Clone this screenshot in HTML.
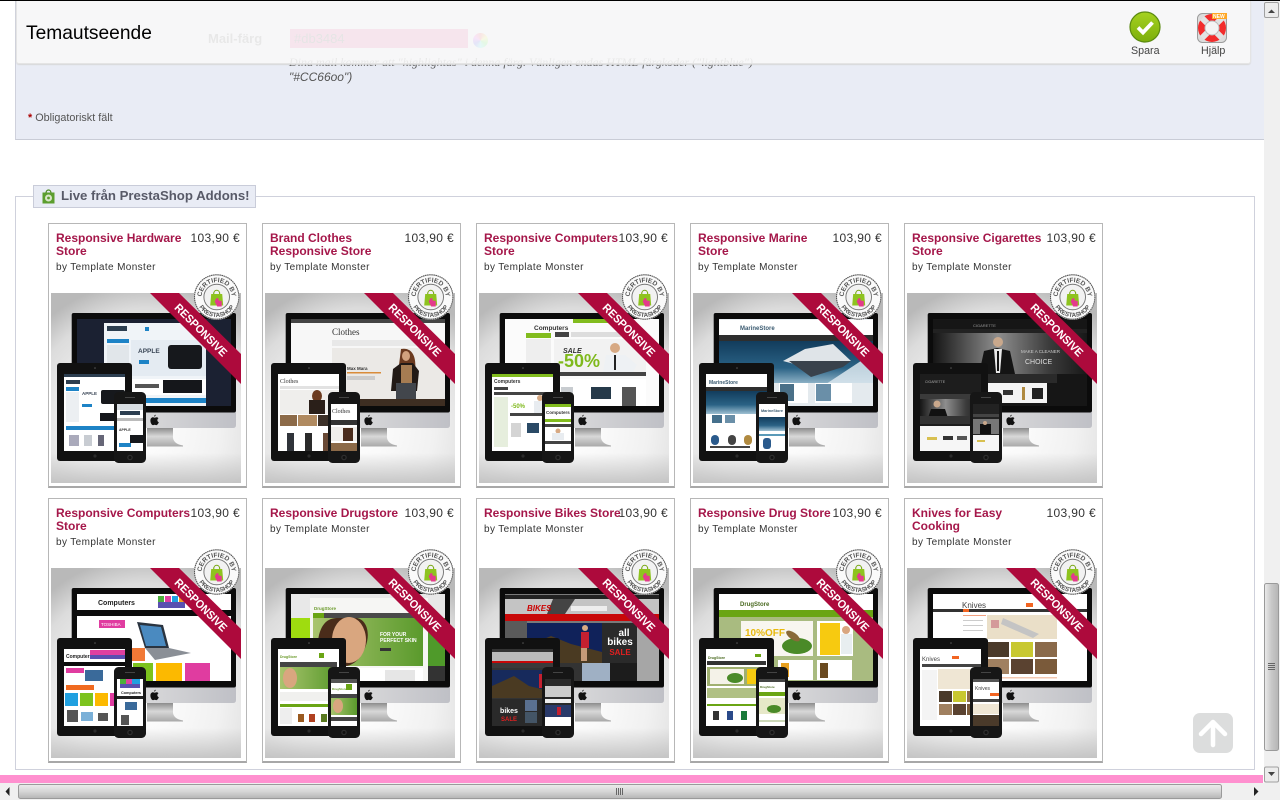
<!DOCTYPE html>
<html><head><meta charset="utf-8"><title>Temautseende</title>
<style>
html,body{margin:0;padding:0;width:1280px;height:800px;overflow:hidden;background:#fff;font-family:"Liberation Sans",Arial,sans-serif}
.a{position:absolute}
.card{position:absolute;width:197px;height:262px;border:1px solid #b7b7b7;border-bottom:2px solid #a8a8a8;background:#fff}
.t{position:absolute;left:7px;top:8px;font-size:12px;line-height:13px;font-weight:bold;color:#a5174a;white-space:nowrap}
.p{position:absolute;right:6px;top:7px;font-size:12px;line-height:14px;color:#333;white-space:nowrap;letter-spacing:.35px}
.b{position:absolute;left:7px;font-size:10px;line-height:12px;color:#333;white-space:nowrap;letter-spacing:.38px}
.card svg.i{position:absolute;left:2px;top:69px;overflow:visible;filter:blur(.3px)}
svg text{font-family:"Liberation Sans",Arial,sans-serif}
</style></head><body>
<svg width="0" height="0" style="position:absolute"><defs>
<radialGradient id="bgr" cx=".5" cy=".72" r=".78"><stop offset="0" stop-color="#fff"/><stop offset=".5" stop-color="#f1f1f1"/><stop offset=".82" stop-color="#dcdcdc"/><stop offset="1" stop-color="#b9b9b9"/></radialGradient>
<linearGradient id="btm" x1="0" x2="0" y1="0" y2="1"><stop offset="0" stop-color="#c0c0c0" stop-opacity="0"/><stop offset="1" stop-color="#bfbfbf" stop-opacity=".85"/></linearGradient>
<linearGradient id="chin" x1="0" x2="1" y1="0" y2="0"><stop offset="0" stop-color="#e6e6e6"/><stop offset=".5" stop-color="#d6d6d8"/><stop offset="1" stop-color="#bfc0c6"/></linearGradient>
<linearGradient id="st" x1="0" x2="0" y1="0" y2="1"><stop offset="0" stop-color="#8c8c8c"/><stop offset=".45" stop-color="#d8d8d8"/><stop offset="1" stop-color="#a8a8a8"/></linearGradient>
<linearGradient id="sea" x1="0" x2="0" y1="0" y2="1"><stop offset="0" stop-color="#123c5c"/><stop offset=".6" stop-color="#2a6285"/><stop offset="1" stop-color="#9fc0d2"/></linearGradient>
<linearGradient id="gy" x1="0" x2="1" y1="0" y2="0"><stop offset="0" stop-color="#151515"/><stop offset=".42" stop-color="#8e8e8e"/><stop offset=".75" stop-color="#3c3c3c"/><stop offset="1" stop-color="#181818"/></linearGradient>
<linearGradient id="grn" x1="0" x2="1" y1="0" y2="0"><stop offset="0" stop-color="#a9c46e"/><stop offset="1" stop-color="#5a9a2c"/></linearGradient>
<linearGradient id="thumbv" x1="0" x2="1" y1="0" y2="0"><stop offset="0" stop-color="#ececec"/><stop offset=".5" stop-color="#c8c8c8"/><stop offset="1" stop-color="#b5b5b5"/></linearGradient>
<linearGradient id="thumbh" x1="0" x2="0" y1="0" y2="1"><stop offset="0" stop-color="#ececec"/><stop offset=".5" stop-color="#d6d6d6"/><stop offset="1" stop-color="#b5b5b5"/></linearGradient>
<linearGradient id="gbtn" x1="0" x2="0" y1="0" y2="1"><stop offset="0" stop-color="#a5d21f"/><stop offset="1" stop-color="#7cae0c"/></linearGradient>
<path id="arcT" d="M-14.5 4A15 15 0 1 1 14.5 4"/>
<path id="arcB" d="M-19.5 4.500A20 20 0 0 0 19.500 4.500"/>
<g id="mon">
<rect width="190" height="190" fill="url(#bgr)"/>
<rect y="160" width="190" height="30" fill="url(#btm)"/>
<path d="M96 135H122V145Q123 151 132 152.500V153.500H96Z" fill="url(#st)"/>
<path d="M20.700 119H185V132Q185 135 182 135H24Q20.700 135 20.700 132Z" fill="url(#chin)"/>
<rect x="20.700" y="20" width="164.300" height="99.500" rx="2" fill="#0b0b0b"/>
<path d="M103 123.500c.3-1 1-1.600 1.700-1.700 0 1-.7 1.800-1.700 1.700zm-3.600 4c0-2 1.300-3.200 2.600-3.200.7 0 1.100.4 1.700.4s1-.4 1.900-.4c.8 0 1.500.4 1.900 1-1.700 1-1.400 3.300.3 4-.5 1.300-1.400 2.800-2.300 2.800-.7 0-1-.4-1.800-.4s-1.100.4-1.800.4c-1.200 0-2.500-2.300-2.500-4.600z" fill="#111"/>
</g>
<g id="tab"><rect x="6" y="70" width="75" height="98" rx="3" fill="#111"/><circle cx="44" cy="75" r=".8" fill="#555"/><circle cx="44" cy="163" r="1.600" fill="#2a2a2a"/></g>
<g id="ph"><rect x="63" y="99" width="32" height="71" rx="4.500" fill="#161616"/><rect x="74" y="104" width="10" height="1" fill="#444"/><circle cx="79" cy="164.500" r="2.800" fill="#2e2e2e"/><circle cx="79" cy="164.500" r="1.500" fill="#111"/></g>
<g id="rib"><polygon points="99,0 128,0 190,61 190,91" fill="#ad0a3c"/></g>
<g id="seal">
<circle r="22.800" fill="#fafafa"/><circle r="22.200" fill="none" stroke="#555" stroke-width="1.100" stroke-dasharray="1.600 .5"/>
<circle r="12.800" fill="none" stroke="#777" stroke-width="1"/>
<circle r="12" fill="#f2f2f2"/>
<path d="M-5.500-3H5.500L6.500 8.500H-6.500Z" fill="#8ec31f"/><path d="M-3-3C-3-8 3-8 3-3" fill="none" stroke="#7aa818" stroke-width="1.100"/>
<path d="M-.5 1.500L1.500 1 2 3.500 5 4V9.500H.5L-2 4.500Z" fill="#e43a8c"/>
</g>
</defs></svg>

<!-- page content behind header -->
<div class="a" style="left:15px;top:0;width:1248px;height:139px;background:#e9ecf5;border-left:1px solid #cfd1dc;border-bottom:1px solid #c9ccd6;box-sizing:content-box"></div>
<div class="a" style="left:208px;top:31px;font-size:13px;font-weight:bold;color:#555">Mail-färg</div>
<div class="a" style="left:290px;top:29px;width:178px;height:19px;background:#db3484;color:#333;font-size:13px;line-height:19px;text-indent:4px">#db3484</div>
<div class="a" style="left:473px;top:33px;width:15px;height:15px;border-radius:50%;background:conic-gradient(#e33,#ee3,#3e3,#3ee,#33e,#e3e,#e33)"></div>
<div class="a" style="left:289px;top:55px;font-family:'Liberation Serif',serif;font-style:italic;font-size:12px;line-height:15px;color:#555;white-space:nowrap">Dina mail kommer att "highlightas" i denna färg. Vänligen endas HTML-färgkoder ("lightblue")<br><span style="font-family:'Liberation Sans',sans-serif">"#CC66oo")</span></div>
<div class="a" style="left:28px;top:112px;font-size:10.800px;line-height:12px;color:#555;white-space:nowrap"><span style="color:#a00;font-weight:bold">*</span> Obligatoriskt fält</div>

<!-- header -->
<div class="a" style="left:0;top:0;width:1280px;height:1px;background:#000"></div>
<div class="a" style="left:16px;top:1px;width:1233px;height:62px;background:rgba(248,248,248,.9);border:1px solid #e4e4e4;border-top:0;border-radius:0 0 3px 3px;box-shadow:0 1px 1px #d8d8d8"></div>
<div class="a" style="left:26px;top:23px;font-size:19.200px;line-height:22px;color:#000;white-space:nowrap">Temautseende</div>
<svg class="a" style="left:1129px;top:11px" width="32" height="32" viewBox="0 0 32 32"><circle cx="16" cy="16" r="15" fill="url(#gbtn)" stroke="#5b8a10" stroke-width="1.200"/><path d="M9 16.500L14 21.500 23.500 11.500" fill="none" stroke="#fff" stroke-width="3.800"/></svg>
<div class="a" style="left:1131px;top:45px;font-size:10.700px;line-height:13px;color:#444">Spara</div>
<svg class="a" style="left:1197px;top:13px" width="30" height="30" viewBox="0 0 30 30"><rect x=".5" y=".5" width="29" height="29" rx="5" fill="#dcdcdc" stroke="#9c9c9c"/><circle cx="15" cy="15" r="14" fill="#f22c2c"/><path d="M5 5L25 25M25 5L5 25" stroke="#e2e2e2" stroke-width="6"/><circle cx="15" cy="15" r="7" fill="#f4f4f4" stroke="#bbb"/><rect x="15" y="0" width="15" height="6" fill="#ffa726"/><text x="16" y="5.200" font-size="5" font-weight="bold" fill="#fff">NEW</text></svg>
<div class="a" style="left:1201px;top:45px;font-size:10.700px;line-height:13px;color:#444">Hjälp</div>

<!-- fieldset -->
<div class="a" style="left:15px;top:196px;width:1238px;height:572px;border:1px solid #cfd1dc"></div>
<div class="a" style="left:33px;top:185px;width:221px;height:21px;background:#e9ecf5;border:1px solid #c9ccd9"></div>
<svg class="a" style="left:41px;top:189px" width="15" height="15" viewBox="0 0 15 15"><rect x="1.500" y="3.500" width="12" height="11" fill="#5c9e2e"/><path d="M5 4C5 0 10 0 10 4" fill="none" stroke="#4e8a24" stroke-width="1.200"/><circle cx="7.500" cy="9" r="3.500" fill="#d9e6c8"/><circle cx="7.500" cy="9" r="1.400" fill="#5c9e2e"/></svg>
<div class="a" style="left:61px;top:188px;font-size:13.200px;line-height:16px;font-weight:bold;color:#585a68;white-space:nowrap">Live från PrestaShop Addons!</div>

<!-- CARD 1 -->
<div class="card" style="left:48px;top:223px"><div class="t">Responsive Hardware<br>Store</div><div class="p">103,90 €</div><div class="b" style="top:38px">by Template Monster</div>
<svg class="i" width="190" height="190" viewBox="0 0 190 190"><use href="#mon"/>
<rect x="26" y="26" width="154" height="87" fill="#1b2132"/><rect x="53" y="30" width="102" height="83" fill="#f0f4f8"/><rect x="56" y="33" width="20" height="5" fill="#2c3e50"/><rect x="94" y="34" width="4" height="4" fill="#1d83c6"/><rect x="56" y="46" width="22" height="4" fill="#1d83c6"/><rect x="56" y="52" width="22" height="32" fill="#e1e6ea"/><rect x="80" y="47" width="75" height="36" fill="#e4ebf2"/><text x="87" y="60" font-size="6.500" font-weight="bold" fill="#3a4656">APPLE</text><rect x="88" y="67" width="10" height="4" fill="#1d83c6"/><rect x="117" y="52" width="34" height="24" rx="3" fill="#16181c"/><rect x="80" y="86" width="75" height="16" fill="#fff"/><rect x="112" y="87" width="39" height="13" fill="#15171b"/><rect x="84" y="91" width="24" height="4" fill="#555"/><rect x="56" y="105" width="99" height="5" fill="#1d83c6"/>
<use href="#tab"/><rect x="13" y="81" width="61" height="77" fill="#fff"/><rect x="13" y="81" width="61" height="3" fill="#2c3e50"/><rect x="15" y="87" width="14" height="4" fill="#2c3e50"/><rect x="15" y="94" width="13" height="4" fill="#1d83c6"/><rect x="15" y="99" width="13" height="30" fill="#eceff2"/><text x="31" y="102" font-size="4.500" font-weight="bold" fill="#3a4656">APPLE</text><rect x="31" y="111" width="10" height="3" fill="#1d83c6"/><rect x="50" y="97" width="24" height="14" rx="2" fill="#16181c"/><rect x="49" y="120" width="25" height="8" fill="#15171b"/><rect x="15" y="133" width="59" height="4" fill="#1d83c6"/><rect x="18" y="142" width="10" height="11" fill="#aab"/><rect x="33" y="142" width="8" height="11" fill="#c8ccd2"/><rect x="47" y="142" width="6" height="11" fill="#667"/>
<use href="#ph"/><rect x="66" y="111" width="26" height="47" fill="#fff"/><rect x="66" y="111" width="26" height="6" fill="#d8dde2"/><rect x="69" y="118" width="20" height="4" fill="#2c3e50"/><rect x="66" y="125" width="26" height="3" fill="#bbb"/><text x="68" y="138" font-size="3.500" font-weight="bold" fill="#333">APPLE</text><rect x="79" y="142" width="13" height="8" fill="#16181c"/><rect x="68" y="150" width="12" height="4" fill="#1d83c6"/>
<use href="#rib"/><text transform="translate(150 37) rotate(45)" x="-34.500" y="4" font-size="11.500" font-weight="bold" fill="#fff" textLength="69" lengthAdjust="spacingAndGlyphs">RESPONSIVE</text>
<g transform="translate(165.700 4)"><use href="#seal"/><text font-size="6.600" font-weight="bold" fill="#555"><textPath href="#arcT" startOffset="50%" text-anchor="middle">CERTIFIED BY</textPath></text><text font-size="6.200" font-weight="bold" fill="#555"><textPath href="#arcB" startOffset="50%" text-anchor="middle">PRESTASHOP</textPath></text></g></svg></div>

<!-- CARD 2 -->
<div class="card" style="left:262px;top:223px"><div class="t">Brand Clothes<br>Responsive Store</div><div class="p">103,90 €</div><div class="b" style="top:38px">by Template Monster</div>
<svg class="i" width="190" height="190" viewBox="0 0 190 190"><use href="#mon"/>
<rect x="26" y="26" width="154" height="87" fill="#f7f7f7"/><rect x="26" y="26" width="154" height="4" fill="#444"/><text x="67" y="42" font-size="9" fill="#333" style="font-family:'Liberation Serif',serif">Clothes</text><rect x="67" y="47" width="105" height="6" fill="#e8e8e8"/><rect x="67" y="55" width="113" height="51" fill="#ebe9e6"/><text x="82" y="77" font-size="4.500" font-weight="bold" fill="#333">Max Mara</text><rect x="82" y="79" width="34" height="1.500" fill="#d98c3a"/><rect x="82" y="83" width="28" height="4" fill="#ccc"/><path d="M136 56C146 54 152 62 150 78L152 92H144V72H134Z" fill="#6b3a1f"/><ellipse cx="141" cy="63" rx="4" ry="5" fill="#d2a27e"/><path d="M126 98L128 76 136 70H148L154 78 152 98Z" fill="#221a16"/><rect x="136" y="72" width="11" height="18" fill="#a67c52"/><rect x="131" y="90" width="20" height="16" fill="#42464c"/><rect x="67" y="106" width="113" height="7" fill="#3e2e22"/>
<use href="#tab"/><rect x="13" y="81" width="61" height="77" fill="#fff"/><text x="15" y="90" font-size="6" fill="#333" style="font-family:'Liberation Serif',serif">Clothes</text><rect x="15" y="93" width="59" height="3" fill="#e2e2e2"/><rect x="15" y="97" width="59" height="24" fill="#efeeec"/><ellipse cx="52" cy="103" rx="5" ry="6" fill="#6b3a1f"/><rect x="44" y="107" width="16" height="14" fill="#2a1f19"/><rect x="15" y="122" width="17" height="11" fill="#8c6a48"/><rect x="33" y="122" width="19" height="11" fill="#b08a60"/><rect x="53" y="122" width="21" height="11" fill="#3c3028"/><rect x="22" y="140" width="7" height="18" fill="#30343a"/><rect x="40" y="140" width="7" height="18" fill="#2a2a2a"/><rect x="58" y="140" width="8" height="18" fill="#6a4a36"/>
<use href="#ph"/><rect x="66" y="111" width="26" height="47" fill="#fff"/><text x="67" y="120" font-size="6" fill="#333" style="font-family:'Liberation Serif',serif">Clothes</text><rect x="66" y="127" width="26" height="5" fill="#333"/><rect x="66" y="134" width="26" height="14" fill="#f0eeeb"/><rect x="78" y="135" width="10" height="13" fill="#4a2c1c"/><rect x="66" y="150" width="26" height="8" fill="#8c6a48"/>
<use href="#rib"/><text transform="translate(150 37) rotate(45)" x="-34.500" y="4" font-size="11.500" font-weight="bold" fill="#fff" textLength="69" lengthAdjust="spacingAndGlyphs">RESPONSIVE</text>
<g transform="translate(165.700 4)"><use href="#seal"/><text font-size="6.600" font-weight="bold" fill="#555"><textPath href="#arcT" startOffset="50%" text-anchor="middle">CERTIFIED BY</textPath></text><text font-size="6.200" font-weight="bold" fill="#555"><textPath href="#arcB" startOffset="50%" text-anchor="middle">PRESTASHOP</textPath></text></g></svg></div>

<!-- CARD 3 -->
<div class="card" style="left:476px;top:223px"><div class="t">Responsive Computers<br>Store</div><div class="p">103,90 €</div><div class="b" style="top:38px">by Template Monster</div>
<svg class="i" width="190" height="190" viewBox="0 0 190 190"><use href="#mon"/>
<rect x="26" y="26" width="154" height="87" fill="#fbfbfb"/><rect x="94" y="26" width="60" height="4" fill="#82bc1e"/><text x="55" y="37" font-size="6.500" font-weight="bold" fill="#333">Computers</text><rect x="47" y="40" width="25" height="5" fill="#82bc1e"/><rect x="47" y="46" width="25" height="30" fill="#eee"/><rect x="76" y="39" width="14" height="5" fill="#444"/><rect x="92" y="39" width="50" height="5" fill="#ddd"/><rect x="75" y="46" width="92" height="33" fill="#f2f2f2"/><text x="84" y="60" font-size="7" font-weight="bold" font-style="italic" fill="#333">SALE</text><text x="79" y="74" font-size="18" font-weight="bold" fill="#7fb91c">-50%</text><circle cx="136" cy="55" r="5" fill="#d7a983"/><path d="M124 79L127 62H146L158 72 154 79Z" fill="#eef1f4"/><rect x="135" y="62" width="2" height="15" fill="#222"/><rect x="75" y="79" width="92" height="4" fill="#444"/><rect x="75" y="86" width="92" height="27" fill="#fff"/><rect x="82" y="94" width="12" height="19" fill="#c8ccd0"/><rect x="112" y="94" width="20" height="12" fill="#263a4a"/><rect x="143" y="94" width="14" height="19" fill="#555"/>
<use href="#tab"/><rect x="13" y="81" width="61" height="77" fill="#fff"/><rect x="13" y="81" width="61" height="3" fill="#82bc1e"/><text x="15" y="90" font-size="5" font-weight="bold" fill="#333">Computers</text><rect x="15" y="94" width="14" height="3" fill="#444"/><rect x="15" y="99" width="59" height="3" fill="#444"/><rect x="15" y="104" width="14" height="50" fill="#e6eedd"/><text x="32" y="115" font-size="6" font-weight="bold" fill="#7fb91c">-50%</text><circle cx="61" cy="105" r="3" fill="#d7a983"/><rect x="55" y="108" width="13" height="12" fill="#e8ecf0"/><rect x="31" y="120" width="43" height="3" fill="#444"/><rect x="32" y="130" width="10" height="14" fill="#d4d4d4"/><rect x="48" y="130" width="12" height="10" fill="#2a4a66"/>
<use href="#ph"/><rect x="66" y="111" width="26" height="47" fill="#fff"/><rect x="66" y="111" width="26" height="3" fill="#82bc1e"/><text x="67" y="121" font-size="4.500" font-weight="bold" fill="#333">Computers</text><rect x="66" y="126" width="26" height="3" fill="#82bc1e"/><rect x="66" y="131" width="26" height="3" fill="#444"/><circle cx="79" cy="138" r="2.500" fill="#d7a983"/><rect x="73" y="140" width="12" height="7" fill="#e8ecf0"/><rect x="66" y="148" width="26" height="3" fill="#444"/>
<use href="#rib"/><text transform="translate(150 37) rotate(45)" x="-34.500" y="4" font-size="11.500" font-weight="bold" fill="#fff" textLength="69" lengthAdjust="spacingAndGlyphs">RESPONSIVE</text>
<g transform="translate(165.700 4)"><use href="#seal"/><text font-size="6.600" font-weight="bold" fill="#555"><textPath href="#arcT" startOffset="50%" text-anchor="middle">CERTIFIED BY</textPath></text><text font-size="6.200" font-weight="bold" fill="#555"><textPath href="#arcB" startOffset="50%" text-anchor="middle">PRESTASHOP</textPath></text></g></svg></div>

<!-- CARD 4 -->
<div class="card" style="left:690px;top:223px"><div class="t">Responsive Marine<br>Store</div><div class="p">103,90 €</div><div class="b" style="top:38px">by Template Monster</div>
<svg class="i" width="190" height="190" viewBox="0 0 190 190"><use href="#mon"/>
<rect x="26" y="26" width="154" height="87" fill="#e9eef2"/><rect x="26" y="27" width="154" height="15" fill="#fff"/><text x="47" y="37" font-size="6" font-weight="bold" fill="#3a5a70">MarineStore</text><rect x="26" y="42" width="154" height="6" fill="#2e2e2e"/><rect x="26" y="48" width="154" height="45" fill="url(#sea)"/><path d="M130 93L180 60V113H110Z" fill="#dce8ee" opacity=".85"/><path d="M90 68L112 56 140 51 158 68 120 76Z" fill="#dfe4e8"/><path d="M96 68L158 68 150 74 118 84Z" fill="#39424c"/><rect x="26" y="90" width="154" height="23" fill="#e4eaee"/><rect x="86" y="90" width="29" height="20" fill="#fff"/><rect x="87" y="91" width="14" height="17" fill="#4a7088"/><rect x="122" y="90" width="37" height="20" fill="#fff"/><rect x="123" y="91" width="15" height="17" fill="#6a8fa8"/>
<use href="#tab"/><rect x="13" y="81" width="61" height="77" fill="#fff"/><text x="16" y="91" font-size="5" font-weight="bold" fill="#3a5a70">MarineStore</text><rect x="13" y="94" width="61" height="4" fill="#2e2e2e"/><rect x="13" y="98" width="61" height="23" fill="url(#sea)"/><rect x="19" y="122" width="10" height="8" fill="#45708c"/><rect x="32" y="122" width="10" height="8" fill="#6a8fa8"/><rect x="18" y="142" width="8" height="10" rx="4" fill="#2a5a8c"/><rect x="35" y="142" width="8" height="10" rx="4" fill="#444"/><rect x="51" y="142" width="8" height="10" rx="4" fill="#b08a40"/><rect x="17" y="153" width="40" height="2" fill="#444"/>
<use href="#ph"/><rect x="66" y="111" width="26" height="47" fill="#fff"/><text x="68" y="119" font-size="3.800" font-weight="bold" fill="#3a5a70">MarineStore</text><rect x="66" y="124" width="26" height="14" fill="url(#sea)"/><rect x="66" y="141" width="26" height="2" fill="#5a9ab8"/><rect x="70" y="145" width="8" height="11" rx="3" fill="#2a5a8c"/>
<use href="#rib"/><text transform="translate(150 37) rotate(45)" x="-34.500" y="4" font-size="11.500" font-weight="bold" fill="#fff" textLength="69" lengthAdjust="spacingAndGlyphs">RESPONSIVE</text>
<g transform="translate(165.700 4)"><use href="#seal"/><text font-size="6.600" font-weight="bold" fill="#555"><textPath href="#arcT" startOffset="50%" text-anchor="middle">CERTIFIED BY</textPath></text><text font-size="6.200" font-weight="bold" fill="#555"><textPath href="#arcB" startOffset="50%" text-anchor="middle">PRESTASHOP</textPath></text></g></svg></div>

<!-- CARD 5 -->
<div class="card" style="left:904px;top:223px"><div class="t">Responsive Cigarettes<br>Store</div><div class="p">103,90 €</div><div class="b" style="top:38px">by Template Monster</div>
<svg class="i" width="190" height="190" viewBox="0 0 190 190"><use href="#mon"/>
<rect x="26" y="26" width="154" height="87" fill="#161616"/><rect x="26" y="36" width="154" height="4" fill="#222"/><text x="66" y="34" font-size="4" fill="#999">CIGARETTE</text><rect x="26" y="40" width="154" height="41" fill="url(#gy)"/><circle cx="91" cy="49" r="5" fill="#c9a88c"/><path d="M72 81L77 58 90 55 103 58 108 81Z" fill="#141414"/><path d="M87 56H95L93 80H89Z" fill="#e8e8e8"/><rect x="90" y="58" width="2" height="20" fill="#111"/><text x="114" y="60" font-size="4.500" fill="#ccc">MAKE A CLEANER</text><text x="118" y="71" font-size="7" fill="#ddd">CHOICE</text><rect x="75" y="81" width="75" height="9" fill="#2a2a2a"/><rect x="80" y="90" width="60" height="20" fill="#f4f4f4"/><rect x="96" y="97" width="10" height="5" fill="#333"/><rect x="115" y="94" width="3" height="13" fill="#b08a40"/><rect x="125" y="95" width="11" height="11" fill="#222"/>
<use href="#tab"/><rect x="13" y="81" width="61" height="77" fill="#1d1d1d"/><text x="18" y="90" font-size="3.500" fill="#aaa">CIGARETTE</text><rect x="13" y="101" width="61" height="5" fill="#3a3a3a"/><rect x="13" y="106" width="61" height="25" fill="url(#gy)"/><circle cx="30" cy="111" r="3.500" fill="#c9a88c"/><path d="M19 131L24 116H38L43 131Z" fill="#111"/><rect x="13" y="123" width="61" height="8" fill="#333"/><rect x="13" y="133" width="61" height="25" fill="#f6f6f6"/><rect x="20" y="144" width="10" height="3" fill="#d8c050"/><rect x="36" y="143" width="10" height="4" fill="#333"/><rect x="50" y="143" width="10" height="4" fill="#555"/>
<use href="#ph"/><rect x="66" y="111" width="26" height="47" fill="#222"/><rect x="66" y="121" width="26" height="3" fill="#444"/><rect x="66" y="126" width="26" height="15" fill="#777"/><rect x="73" y="131" width="11" height="10" fill="#111"/><circle cx="78" cy="130" r="2" fill="#c9a88c"/><rect x="66" y="142" width="26" height="16" fill="#f6f6f6"/><rect x="70" y="147" width="8" height="2" fill="#d8c050"/>
<use href="#rib"/><text transform="translate(150 37) rotate(45)" x="-34.500" y="4" font-size="11.500" font-weight="bold" fill="#fff" textLength="69" lengthAdjust="spacingAndGlyphs">RESPONSIVE</text>
<g transform="translate(165.700 4)"><use href="#seal"/><text font-size="6.600" font-weight="bold" fill="#555"><textPath href="#arcT" startOffset="50%" text-anchor="middle">CERTIFIED BY</textPath></text><text font-size="6.200" font-weight="bold" fill="#555"><textPath href="#arcB" startOffset="50%" text-anchor="middle">PRESTASHOP</textPath></text></g></svg></div>

<!-- CARD 6 -->
<div class="card" style="left:48px;top:498px"><div class="t">Responsive Computers<br>Store</div><div class="p">103,90 €</div><div class="b" style="top:38px">by Template Monster</div>
<svg class="i" width="190" height="190" viewBox="0 0 190 190"><use href="#mon"/>
<rect x="26" y="26" width="154" height="87" fill="#fff"/><text x="47" y="37" font-size="7" font-weight="bold" fill="#222">Computers</text><rect x="107" y="28" width="6" height="6" fill="#4caf3c"/><rect x="114" y="28" width="6" height="6" fill="#e040a0"/><rect x="121" y="28" width="6" height="6" fill="#20a0e0"/><rect x="128" y="28" width="6" height="6" fill="#f0a020"/><rect x="107" y="34" width="27" height="6" fill="#5a50b0"/><rect x="26" y="42" width="154" height="6" fill="#0c0c0c"/><rect x="48" y="52" width="26" height="8" fill="#e03ca0"/><text x="50" y="58" font-size="4.500" fill="#fff">TOSHIBA</text><path d="M86 54L112 57 118 80 94 80Z" fill="#2a3440"/><path d="M89 57L110 59 115 78 95 78Z" fill="#4a8ac0"/><path d="M94 80L118 80 140 85 104 92Z" fill="#8a8f96"/><rect x="48" y="80" width="46" height="13" fill="#f06a20" opacity=".9"/><rect x="82" y="95" width="20" height="18" fill="#7cc31e"/><rect x="105" y="95" width="26" height="18" fill="#fcb900"/><rect x="134" y="95" width="25" height="18" fill="#e03ca0"/><rect x="48" y="95" width="32" height="18" fill="#f7f7f7"/>
<use href="#tab"/><rect x="13" y="81" width="61" height="77" fill="#fff"/><text x="15" y="90" font-size="5" font-weight="bold" fill="#222">Computers</text><rect x="39" y="82" width="35" height="5" fill="#e040a0"/><rect x="39" y="87" width="35" height="4" fill="#5a50b0"/><rect x="13" y="94" width="61" height="4" fill="#0c0c0c"/><rect x="15" y="100" width="18" height="5" fill="#e03ca0"/><rect x="34" y="102" width="18" height="11" fill="#3a6a9a"/><rect x="15" y="117" width="28" height="5" fill="#f06a20"/><rect x="14" y="125" width="13" height="13" fill="#20a0e0"/><rect x="29" y="125" width="13" height="13" fill="#7cc31e"/><rect x="44" y="125" width="13" height="13" fill="#fcb900"/><rect x="59" y="125" width="15" height="13" fill="#e03ca0"/><rect x="16" y="142" width="11" height="12" fill="#555"/><rect x="30" y="144" width="12" height="9" fill="#7ab0d8"/><rect x="47" y="145" width="10" height="8" fill="#555"/>
<use href="#ph"/><rect x="66" y="111" width="26" height="47" fill="#fff"/><rect x="69" y="111" width="6" height="5" fill="#4caf3c"/><rect x="75" y="111" width="6" height="5" fill="#e040a0"/><rect x="81" y="111" width="8" height="5" fill="#20a0e0"/><rect x="69" y="116" width="20" height="4" fill="#5a50b0"/><text x="70" y="126" font-size="3.800" font-weight="bold" fill="#222">Computers</text><rect x="66" y="128" width="26" height="3" fill="#222"/><rect x="74" y="134" width="12" height="8" fill="#3a6a9a"/><rect x="70" y="147" width="8" height="10" fill="#555"/>
<use href="#rib"/><text transform="translate(150 37) rotate(45)" x="-34.500" y="4" font-size="11.500" font-weight="bold" fill="#fff" textLength="69" lengthAdjust="spacingAndGlyphs">RESPONSIVE</text>
<g transform="translate(165.700 4)"><use href="#seal"/><text font-size="6.600" font-weight="bold" fill="#555"><textPath href="#arcT" startOffset="50%" text-anchor="middle">CERTIFIED BY</textPath></text><text font-size="6.200" font-weight="bold" fill="#555"><textPath href="#arcB" startOffset="50%" text-anchor="middle">PRESTASHOP</textPath></text></g></svg></div>

<!-- CARD 7 -->
<div class="card" style="left:262px;top:498px"><div class="t">Responsive Drugstore</div><div class="p">103,90 €</div><div class="b" style="top:25px">by Template Monster</div>
<svg class="i" width="190" height="190" viewBox="0 0 190 190"><use href="#mon"/>
<rect x="26" y="26" width="154" height="87" fill="#e8e8e8"/><rect x="26" y="50" width="20" height="48" fill="#9fdc0f"/><rect x="134" y="50" width="46" height="48" fill="#4f9a2a"/><rect x="26" y="98" width="154" height="15" fill="#333"/><rect x="45" y="30" width="118" height="83" fill="#f6f6f4"/><text x="49" y="42" font-size="4.500" font-weight="bold" fill="#6a9a2a">DrugStore</text><rect x="48" y="45" width="110" height="5" fill="#4a4a4a"/><rect x="48" y="45" width="11" height="5" fill="#6aa514"/><rect x="48" y="50" width="110" height="48" fill="url(#grn)"/><path d="M53 98C50 68 56 50 72 50H92C102 52 106 66 100 80 96 90 90 96 82 98Z" fill="#4a2c1a"/><ellipse cx="84" cy="72" rx="17" ry="23" fill="#d9a67f"/><text x="115" y="68" font-size="5" font-weight="bold" fill="#fff">FOR YOUR</text><text x="115" y="74" font-size="5" font-weight="bold" fill="#fff">PERFECT SKIN</text><rect x="115" y="80" width="11" height="3" fill="#333"/><rect x="48" y="100" width="110" height="13" fill="#fff"/><rect x="120" y="102" width="30" height="11" fill="#e6e6e6"/>
<use href="#tab"/><rect x="13" y="81" width="61" height="77" fill="#fff"/><text x="15" y="90" font-size="3.500" font-weight="bold" fill="#6a9a2a">DrugStore</text><rect x="54" y="85" width="5" height="5" fill="#6aa514"/><rect x="15" y="94" width="57" height="5" fill="#444"/><rect x="15" y="99" width="57" height="22" fill="url(#grn)"/><ellipse cx="25" cy="110" rx="7" ry="10" fill="#d9a67f"/><rect x="15" y="124" width="57" height="9" fill="#f0f0ee"/><rect x="15" y="136" width="57" height="3" fill="#6aa514"/><rect x="15" y="140" width="12" height="16" fill="#eee"/><rect x="33" y="146" width="6" height="8" fill="#9a5a20"/><rect x="44" y="146" width="6" height="8" fill="#b04020"/><rect x="56" y="146" width="6" height="8" fill="#5a7a20"/>
<use href="#ph"/><rect x="66" y="111" width="26" height="47" fill="#fff"/><rect x="66" y="111" width="26" height="4" fill="#555"/><text x="67" y="122" font-size="3" font-weight="bold" fill="#6a9a2a">DrugStore</text><rect x="81" y="116" width="6" height="6" fill="#6aa514"/><rect x="66" y="126" width="26" height="4" fill="#444"/><rect x="66" y="130" width="26" height="17" fill="url(#grn)"/><ellipse cx="73" cy="138" rx="5" ry="7" fill="#d9a67f"/><rect x="66" y="149" width="26" height="4" fill="#444"/>
<use href="#rib"/><text transform="translate(150 37) rotate(45)" x="-34.500" y="4" font-size="11.500" font-weight="bold" fill="#fff" textLength="69" lengthAdjust="spacingAndGlyphs">RESPONSIVE</text>
<g transform="translate(165.700 4)"><use href="#seal"/><text font-size="6.600" font-weight="bold" fill="#555"><textPath href="#arcT" startOffset="50%" text-anchor="middle">CERTIFIED BY</textPath></text><text font-size="6.200" font-weight="bold" fill="#555"><textPath href="#arcB" startOffset="50%" text-anchor="middle">PRESTASHOP</textPath></text></g></svg></div>

<!-- CARD 8 -->
<div class="card" style="left:476px;top:498px"><div class="t">Responsive Bikes Store</div><div class="p">103,90 €</div><div class="b" style="top:25px">by Template Monster</div>
<svg class="i" width="190" height="190" viewBox="0 0 190 190"><use href="#mon"/>
<rect x="26" y="26" width="154" height="87" fill="#7a7a7a"/><rect x="26" y="27" width="154" height="4" fill="#222"/><rect x="26" y="31" width="154" height="15" fill="#c4c4c4"/><path d="M74 31H96L86 46H68Z" fill="#444"/><text x="48" y="43" font-size="8" font-weight="bold" font-style="italic" fill="#c00">BIKES</text><rect x="92" y="38" width="36" height="5" fill="#eee"/><rect x="26" y="46" width="154" height="7" fill="#c80808"/><rect x="26" y="53" width="22" height="60" fill="#5a5a5a"/><rect x="48" y="55" width="75" height="40" fill="#10225a"/><path d="M48 95V78L72 68 92 76 123 84V95Z" fill="#4a3a22"/><circle cx="106" cy="60" r="3" fill="#d7a983"/><rect x="102" y="64" width="8" height="16" fill="#c42030"/><rect x="102" y="80" width="6" height="13" fill="#c59a78"/><rect x="123" y="55" width="35" height="40" fill="#2a2a2a"/><text x="145" y="68" font-size="10" font-weight="bold" fill="#fff" text-anchor="middle">all</text><text x="141" y="77" font-size="10" font-weight="bold" fill="#fff" text-anchor="middle">bikes</text><text x="141" y="87" font-size="8" font-weight="bold" fill="#e02020" text-anchor="middle">SALE</text><rect x="103" y="95" width="28" height="18" fill="#9fb0c4"/><rect x="131" y="95" width="27" height="18" fill="#1c1c1c"/><rect x="78" y="95" width="25" height="18" fill="#333"/><rect x="158" y="53" width="22" height="60" fill="#a6a6a6"/>
<use href="#tab"/><rect x="13" y="81" width="61" height="77" fill="#333"/><rect x="13" y="84" width="61" height="9" fill="#bbb"/><rect x="13" y="93" width="61" height="7" fill="#3a3a3a"/><rect x="13" y="93" width="61" height="2" fill="#c80808"/><rect x="13" y="102" width="61" height="28" fill="#172a5c"/><path d="M13 130V118L35 108 50 118 74 124V130Z" fill="#4a3a22"/><rect x="60" y="106" width="5" height="14" fill="#c42030"/><rect x="13" y="131" width="61" height="27" fill="#2a2a2a"/><text x="30" y="145" font-size="7" font-weight="bold" fill="#fff" text-anchor="middle">bikes</text><text x="30" y="153" font-size="6" font-weight="bold" fill="#e02020" text-anchor="middle">SALE</text><rect x="46" y="132" width="12" height="11" fill="#5a7090"/><rect x="46" y="144" width="12" height="11" fill="#456"/>
<use href="#ph"/><rect x="66" y="111" width="26" height="47" fill="#2a2a2a"/><rect x="66" y="118" width="26" height="11" fill="#ccc"/><rect x="66" y="131" width="26" height="4" fill="#eee"/><rect x="66" y="137" width="26" height="12" fill="#2a3a6a"/><rect x="78" y="139" width="4" height="8" fill="#c42030"/><rect x="66" y="149" width="26" height="9" fill="#fff"/>
<use href="#rib"/><text transform="translate(150 37) rotate(45)" x="-34.500" y="4" font-size="11.500" font-weight="bold" fill="#fff" textLength="69" lengthAdjust="spacingAndGlyphs">RESPONSIVE</text>
<g transform="translate(165.700 4)"><use href="#seal"/><text font-size="6.600" font-weight="bold" fill="#555"><textPath href="#arcT" startOffset="50%" text-anchor="middle">CERTIFIED BY</textPath></text><text font-size="6.200" font-weight="bold" fill="#555"><textPath href="#arcB" startOffset="50%" text-anchor="middle">PRESTASHOP</textPath></text></g></svg></div>

<!-- CARD 9 -->
<div class="card" style="left:690px;top:498px"><div class="t">Responsive Drug Store</div><div class="p">103,90 €</div><div class="b" style="top:25px">by Template Monster</div>
<svg class="i" width="190" height="190" viewBox="0 0 190 190"><use href="#mon"/>
<rect x="26" y="26" width="154" height="87" fill="#fff"/><text x="47" y="38" font-size="6" font-weight="bold" fill="#4a6a20">DrugStore</text><rect x="26" y="42" width="154" height="7" fill="#6aa514"/><rect x="26" y="49" width="154" height="64" fill="#a9bb80"/><rect x="48" y="53" width="72" height="35" fill="#f8f6f0"/><text x="52" y="68" font-size="10" font-weight="bold" fill="#e8b90e">10%OFF</text><ellipse cx="104" cy="78" rx="15" ry="8" fill="#4a8a28"/><ellipse cx="100" cy="68" rx="8" ry="3.500" fill="#8a6a3a" transform="rotate(35 100 68)"/><rect x="124" y="53" width="36" height="35" fill="#fff"/><rect x="127" y="55" width="20" height="32" fill="#f7ca10"/><circle cx="153" cy="62" r="4" fill="#d9a67f"/><rect x="148" y="66" width="11" height="20" fill="#e8eef0"/><rect x="85" y="92" width="35" height="20" fill="#fff"/><rect x="88" y="95" width="8" height="14" fill="#e8a020"/><rect x="124" y="92" width="35" height="20" fill="#fff"/><rect x="127" y="95" width="8" height="15" fill="#6a4a20"/>
<use href="#tab"/><rect x="13" y="81" width="61" height="77" fill="#fff"/><text x="15" y="91" font-size="3.500" font-weight="bold" fill="#4a6a20">DrugStore</text><rect x="62" y="86" width="6" height="3" fill="#6aa514"/><rect x="14" y="93" width="59" height="4" fill="#333"/><rect x="14" y="99" width="59" height="19" fill="#a0b070"/><rect x="17" y="101" width="34" height="15" fill="#f4f2e8"/><ellipse cx="42" cy="110" rx="8" ry="5" fill="#4a8a28"/><rect x="54" y="101" width="10" height="15" fill="#f7ca10"/><rect x="14" y="120" width="59" height="10" fill="#b0c084"/><rect x="14" y="136" width="59" height="2" fill="#6aa514"/><rect x="20" y="143" width="6" height="9" fill="#333"/><rect x="34" y="143" width="6" height="9" fill="#2a4a8a"/><rect x="48" y="143" width="6" height="9" fill="#1a7a3a"/>
<use href="#ph"/><rect x="66" y="111" width="26" height="47" fill="#fff"/><rect x="66" y="111" width="26" height="3" fill="#444"/><text x="67" y="120" font-size="3" font-weight="bold" fill="#4a6a20">DrugStore</text><rect x="66" y="124" width="26" height="4" fill="#6aa514"/><rect x="66" y="130" width="26" height="16" fill="#e6e8c8"/><ellipse cx="81" cy="141" rx="7" ry="4" fill="#4a8a28"/><rect x="66" y="152" width="26" height="2" fill="#ccd8b8"/>
<use href="#rib"/><text transform="translate(150 37) rotate(45)" x="-34.500" y="4" font-size="11.500" font-weight="bold" fill="#fff" textLength="69" lengthAdjust="spacingAndGlyphs">RESPONSIVE</text>
<g transform="translate(165.700 4)"><use href="#seal"/><text font-size="6.600" font-weight="bold" fill="#555"><textPath href="#arcT" startOffset="50%" text-anchor="middle">CERTIFIED BY</textPath></text><text font-size="6.200" font-weight="bold" fill="#555"><textPath href="#arcB" startOffset="50%" text-anchor="middle">PRESTASHOP</textPath></text></g></svg></div>

<!-- CARD 10 -->
<div class="card" style="left:904px;top:498px"><div class="t">Knives for Easy<br>Cooking</div><div class="p">103,90 €</div><div class="b" style="top:38px">by Template Monster</div>
<svg class="i" width="190" height="190" viewBox="0 0 190 190"><use href="#mon"/>
<rect x="26" y="26" width="154" height="87" fill="#fff"/><text x="55" y="40" font-size="8" fill="#444">Knives</text><rect x="119" y="35" width="7" height="4" fill="#f26522"/><rect x="26" y="41" width="154" height="3" fill="#333"/><rect x="56" y="41" width="6" height="3" fill="#f26522"/><rect x="56" y="47" width="23" height="1" fill="#f2a080"/><rect x="56" y="52" width="20" height="1" fill="#ccc"/><rect x="56" y="57" width="20" height="1" fill="#ccc"/><rect x="56" y="62" width="20" height="1" fill="#ccc"/><rect x="80" y="47" width="70" height="24" fill="#eadfc8"/><path d="M96 50L132 66 126 70 94 56Z" fill="#c4c4c4"/><rect x="84" y="52" width="8" height="8" fill="#d49a9a"/><rect x="80" y="74" width="22" height="15" fill="#4a3a2a"/><rect x="104" y="74" width="22" height="15" fill="#c8c830"/><rect x="128" y="74" width="22" height="15" fill="#8a6a4a"/><rect x="80" y="91" width="22" height="15" fill="#a08060"/><rect x="104" y="91" width="22" height="15" fill="#5a4230"/><rect x="128" y="91" width="22" height="15" fill="#7a5a3a"/><rect x="56" y="109" width="94" height="1.500" fill="#f4c8b0"/>
<use href="#tab"/><rect x="13" y="81" width="61" height="77" fill="#fff"/><text x="15" y="93" font-size="6" fill="#444">Knives</text><rect x="45" y="88" width="7" height="3" fill="#f26522"/><rect x="15" y="96" width="59" height="3" fill="#444"/><rect x="15" y="102" width="15" height="50" fill="#f4f4f4"/><rect x="31" y="101" width="43" height="20" fill="#efe6d4"/><rect x="32" y="123" width="13" height="11" fill="#4a3a2a"/><rect x="46" y="123" width="13" height="11" fill="#c8c830"/><rect x="60" y="123" width="13" height="11" fill="#8a6a4a"/><rect x="32" y="136" width="13" height="11" fill="#a08060"/><rect x="46" y="136" width="13" height="11" fill="#5a4230"/><rect x="60" y="136" width="13" height="11" fill="#7a5a3a"/>
<use href="#ph"/><rect x="66" y="111" width="26" height="47" fill="#fff"/><rect x="66" y="111" width="26" height="3" fill="#555"/><text x="68" y="122" font-size="5" fill="#444">Knives</text><rect x="83" y="125" width="9" height="3" fill="#f26522"/><rect x="66" y="131" width="26" height="3" fill="#444"/><rect x="66" y="136" width="26" height="10" fill="#efe6d4"/><rect x="66" y="147" width="26" height="11" fill="#4a3a2a"/>
<use href="#rib"/><text transform="translate(150 37) rotate(45)" x="-34.500" y="4" font-size="11.500" font-weight="bold" fill="#fff" textLength="69" lengthAdjust="spacingAndGlyphs">RESPONSIVE</text>
<g transform="translate(165.700 4)"><use href="#seal"/><text font-size="6.600" font-weight="bold" fill="#555"><textPath href="#arcT" startOffset="50%" text-anchor="middle">CERTIFIED BY</textPath></text><text font-size="6.200" font-weight="bold" fill="#555"><textPath href="#arcB" startOffset="50%" text-anchor="middle">PRESTASHOP</textPath></text></g></svg></div>

<!-- back to top -->
<svg class="a" style="left:1193px;top:713px" width="40" height="40" viewBox="0 0 40 40"><rect width="40" height="40" rx="7" fill="#dcdddd"/><path d="M20 32V10M8 21L20 9 32 21" fill="none" stroke="#fff" stroke-width="4.500" stroke-linecap="round" stroke-linejoin="round"/></svg>

<!-- pink bar -->
<div class="a" style="left:0;top:775px;width:1263px;height:8px;background:#ff90cf"></div>

<!-- scrollbars -->
<div class="a" style="left:1264px;top:1px;width:16px;height:799px;background:#f0f0f0"></div>
<div class="a" style="left:0;top:783px;width:1264px;height:17px;background:#f0f0f0"></div>
<svg class="a" style="left:0;top:0" width="1280" height="800" viewBox="0 0 1280 800">
<rect x="1264.500" y="2.500" width="14" height="15" rx="1.500" fill="#ececec" stroke="#a0a0a0"/><path d="M1268 13L1271.500 9.500 1275 13Z" fill="#444"/>
<rect x="1264.500" y="583.500" width="14" height="167" rx="2" fill="url(#thumbv)" stroke="#9a9a9a"/><path d="M1268 663.500h7M1268 665.500h7M1268 667.500h7M1268 669.500h7" stroke="#666"/>
<rect x="1264.500" y="767" width="14" height="15" rx="1.500" fill="#ececec" stroke="#a0a0a0"/><path d="M1268 772L1271.500 776 1275 772Z" fill="#444"/>
<path d="M9.500 787L5.500 791.500 9.500 796Z" fill="#222"/>
<rect x="18.500" y="784.500" width="1203" height="14" rx="2" fill="url(#thumbh)" stroke="#9a9a9a"/><path d="M616.500 788v7M618.500 788v7M620.500 788v7M622.500 788v7" stroke="#666"/>
<path d="M1254 787L1258.500 791.500 1254 796Z" fill="#222"/>
</svg>
</body></html>
